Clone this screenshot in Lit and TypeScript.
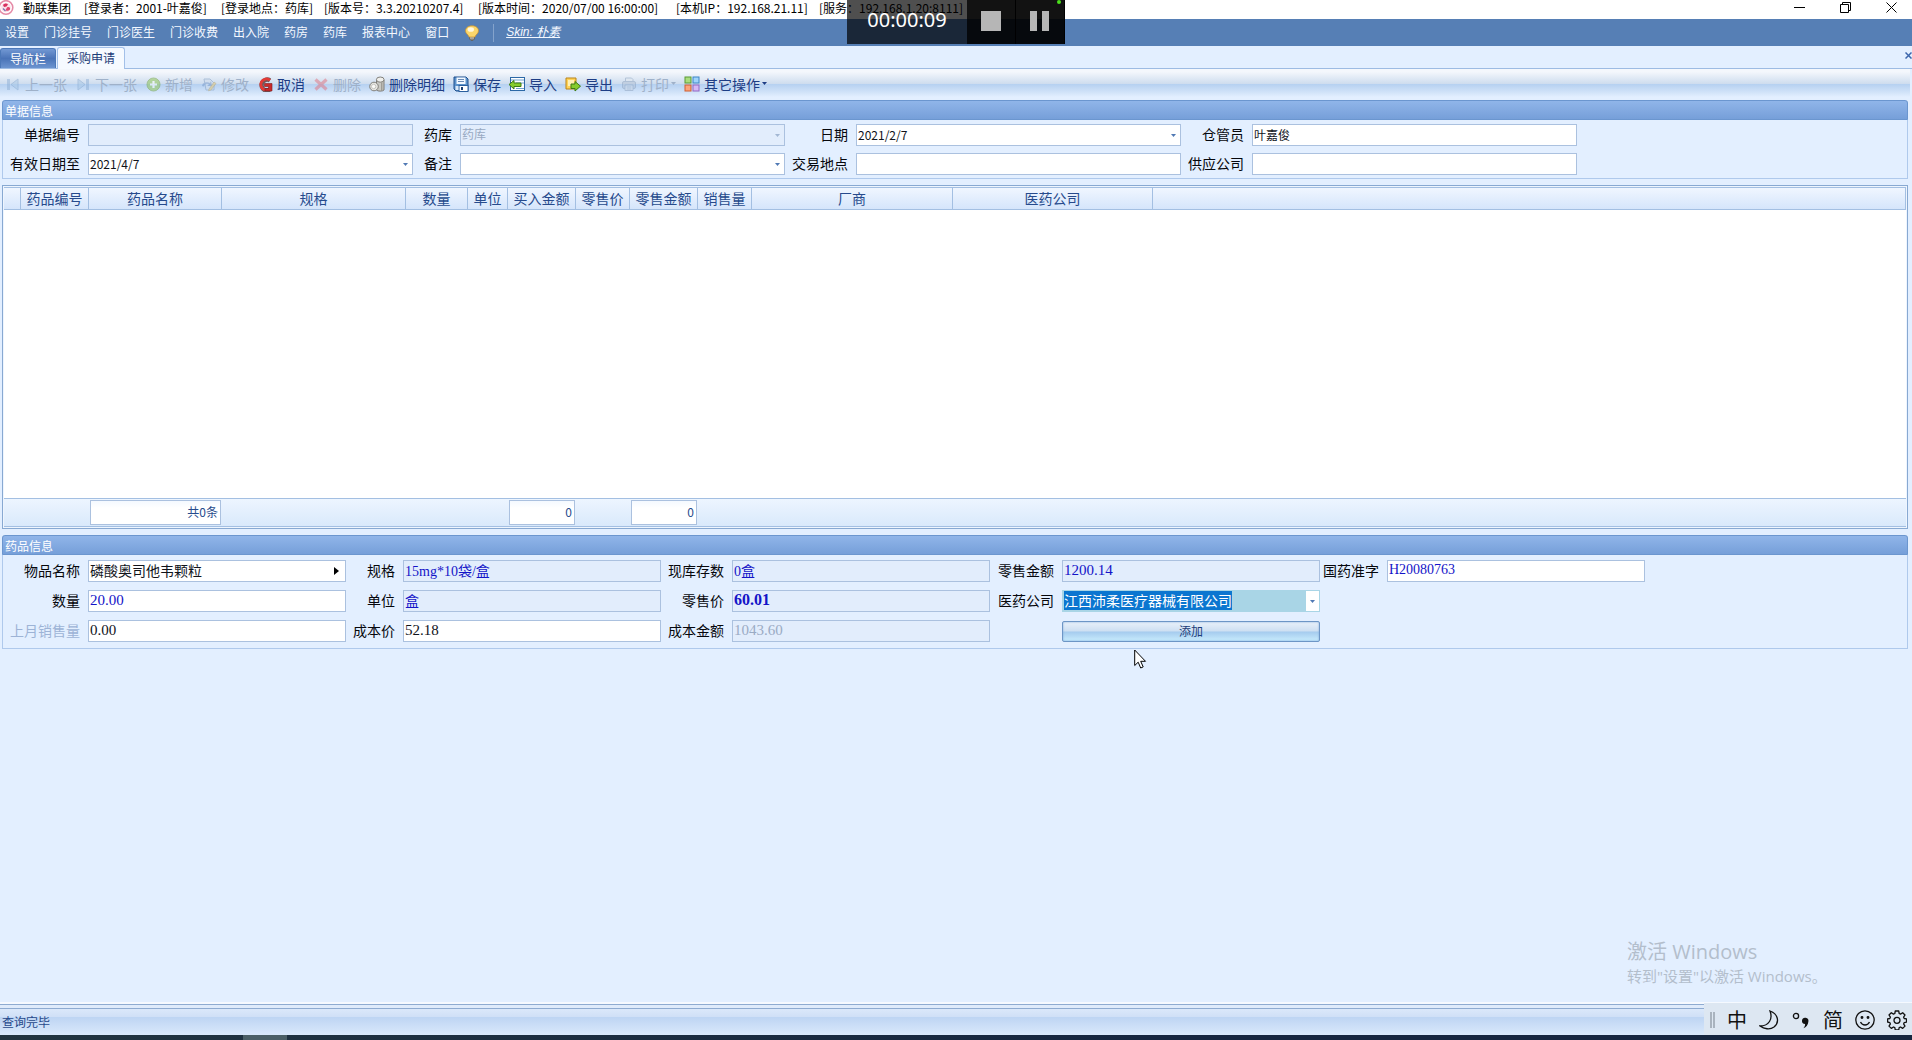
import { LitElement, html, css, svg, nothing, type TemplateResult } from "lit";
import { customElement, query } from "lit/decorators.js";
import { classMap } from "lit/directives/class-map.js";

interface Tool {
  label: string;
  icon: TemplateResult;
  disabled?: boolean;
  menu?: boolean;
}

interface Field {
  id: string;
  label: string;
  value?: string;
  kind?: "text" | "date" | "select" | "lookup" | "combo";
  tone?: "number" | "mixed" | "code" | "strong";
  ink?: "blue" | "grey";
  locked?: boolean;
  faint?: boolean;
}

const icon = (body: TemplateResult) =>
  html`<svg class="icon" viewBox="0 0 16 16" aria-hidden="true">${body}</svg>`;

const glyphs = {
  first: icon(svg`<rect x="2" y="3" width="3" height="11" fill="#8fb0d6"/><path d="M13 3v11L6 8.500z" fill="#a9c8e6" stroke="#86a8cf"/>`),
  last: icon(svg`<rect x="11" y="3" width="3" height="11" fill="#8fb0d6"/><path d="M3 3v11l7-5.500z" fill="#a9c8e6" stroke="#86a8cf"/>`),
  add: icon(svg`<circle cx="8.500" cy="8.500" r="6.500" fill="#8bc34a" stroke="#6fa23a"/><path d="M8.500 5v7M5 8.500h7" stroke="#fff" stroke-width="2.200"/>`),
  edit: icon(svg`<path d="M3 3h6l4 4v7H5z" fill="#cfdcec" stroke="#7f9cc0"/><path d="M1 10a5 4 0 0 1 8-3l1-2 1 5-5 0 2-1.500a3 3 0 0 0-5 2z" fill="#7396c8"/><path d="M8 13l5-7 2 1.500-5 6.500-2.500.8z" fill="#e8c66b" stroke="#a58c4c" stroke-width=".6"/>`),
  cancel: icon(svg`<path d="M13 4.300A5.600 5.600 0 1 0 8 14.300h5.500" fill="none" stroke="#6e5a5c" stroke-width="4.400"/><path d="M13 4.300A5.600 5.600 0 1 0 8 14" fill="none" stroke="#e23a35" stroke-width="2.800"/><path d="M7.500 7.500H15V15H8v-2.500h3.500V10.500h-4z" fill="#c92a2a" stroke="#7c1b1f" stroke-width=".6"/>`),
  remove: icon(svg`<path d="M2.500 3.500l11 10M13.500 3.500l-11 10" stroke="#e0707c" stroke-width="3.200"/>`),
  bin: icon(svg`<path d="M7.500 4v10c1 1.600 6.500 1.400 7.500 0V4z" fill="#c9c9c4" stroke="#77756f" stroke-width=".9"/><ellipse cx="11.250" cy="3.600" rx="3.800" ry="2.600" fill="#efefec" stroke="#77756f" stroke-width=".9"/><path d="M12.800 6.500v8" stroke="#8e8b84"/><circle cx="5" cy="10.500" r="4.300" fill="#e6e6e2" stroke="#77756f" stroke-width=".9"/><circle cx="4.600" cy="10.500" r="2.200" fill="#fafaf8" stroke="#b5b3ad" stroke-width=".7"/>`),
  save: icon(svg`<path d="M1 1h12l2 2v12H3l-2-2z" fill="#5c93cc" stroke="#1e4f8c"/><rect x="3.500" y="1.500" width="9" height="6.500" fill="#f2f8ff"/><path d="M5 3.500h6M5 5.500h6" stroke="#6b8cb5"/><rect x="6" y="9.500" width="9" height="6" fill="#fff" stroke="#2b5f9e"/><rect x="8" y="11" width="2" height="3" fill="#1b3f73"/><rect x="2.500" y="10" width="3" height="4" fill="#dbe9f8"/>`),
  importIn: icon(svg`<rect x="1.500" y="1.500" width="14" height="13" fill="#fff" stroke="#2c68a6"/><path d="M2 4h13M7 7h8M7 12.500h8" stroke="#6fa0cf"/><path d="M0 8.500l5-4v2.500h7v3.500H5v2.500z" fill="#86cc2c" stroke="#3c7a15"/>`),
  exportOut: icon(svg`<path d="M1 2h10v11H1z" fill="#ffd257" stroke="#b98318"/><path d="M3 4h6v6H3z" fill="#fff0b3"/><path d="M6 8h4V5.500l5.500 4.700-5.500 4.800V12.500H6z" fill="#86cc2c" stroke="#3c7a15"/>`),
  print: icon(svg`<path d="M4.500 6V2h6l1.500 1.500V6" fill="#dfe6ef" stroke="#8aa0bd"/><rect x="1.500" y="5.500" width="13" height="7" rx="1.500" fill="#b3c1d4" stroke="#8aa0bd"/><path d="M4 9h8v5.500H4z" fill="#dfe6ef" stroke="#8aa0bd"/><path d="M5.500 11h5M5.500 13h5" stroke="#8aa0bd"/>`),
  tiles: icon(svg`<rect x="1" y="1" width="6" height="6" fill="#a9dd7d" stroke="#5b9a34"/><rect x="9" y="1" width="6" height="6" fill="#9fd3fb" stroke="#3c86c6"/><rect x="1" y="9" width="6" height="6" fill="#fba37c" stroke="#cf5f30"/><rect x="9" y="9" width="6" height="6" fill="#d5b8f5" stroke="#9068c4"/>`),
};

const MENUS = ["设置", "门诊挂号", "门诊医生", "门诊收费", "出入院", "药房", "药库", "报表中心", "窗口"];

const TITLE = [
  "勤联集团",
  "[登录者：2001-叶嘉俊]",
  "[登录地点：药库]",
  "[版本号：3.3.20210207.4]",
  "[版本时间：2020/07/00 16:00:00]",
  "[本机IP：192.168.21.11]",
  "[服务：192.168.1.20:8111]",
];

const TOOLS: Tool[] = [
  { label: "上一张", icon: glyphs.first, disabled: true },
  { label: "下一张", icon: glyphs.last, disabled: true },
  { label: "新增", icon: glyphs.add, disabled: true },
  { label: "修改", icon: glyphs.edit, disabled: true },
  { label: "取消", icon: glyphs.cancel },
  { label: "删除", icon: glyphs.remove, disabled: true },
  { label: "删除明细", icon: glyphs.bin },
  { label: "保存", icon: glyphs.save },
  { label: "导入", icon: glyphs.importIn },
  { label: "导出", icon: glyphs.exportOut },
  { label: "打印", icon: glyphs.print, disabled: true, menu: true },
  { label: "其它操作", icon: glyphs.tiles, menu: true },
];

const BILL: Field[] = [
  { id: "bill-no", label: "单据编号", locked: true },
  { id: "store", label: "药库", value: "药库", kind: "select", locked: true },
  { id: "date", label: "日期", value: "2021/2/7", kind: "date" },
  { id: "keeper", label: "仓管员", value: "叶嘉俊" },
  { id: "valid", label: "有效日期至", value: "2021/4/7", kind: "date" },
  { id: "note", label: "备注", kind: "select" },
  { id: "place", label: "交易地点" },
  { id: "supplier", label: "供应公司" },
];

const DRUG: Field[][] = [
  [
    { id: "name", label: "物品名称", value: "磷酸奥司他韦颗粒", kind: "lookup", tone: "mixed" },
    { id: "spec", label: "规格", value: "15mg*10袋/盒", tone: "mixed", ink: "blue", locked: true },
    { id: "stock", label: "现库存数", value: "0盒", tone: "mixed", ink: "blue", locked: true },
    { id: "retail-sum", label: "零售金额", value: "1200.14", tone: "number", ink: "blue", locked: true },
    { id: "approval", label: "国药准字", value: "H20080763", tone: "code", ink: "blue" },
  ],
  [
    { id: "qty", label: "数量", value: "20.00", tone: "number", ink: "blue" },
    { id: "unit", label: "单位", value: "盒", tone: "mixed", ink: "blue", locked: true },
    { id: "retail", label: "零售价", value: "60.01", tone: "strong", ink: "blue", locked: true },
    { id: "company", label: "医药公司", value: "江西沛柔医疗器械有限公司", kind: "combo", tone: "mixed" },
  ],
  [
    { id: "last-sales", label: "上月销售量", value: "0.00", tone: "number", faint: true },
    { id: "cost", label: "成本价", value: "52.18", tone: "number" },
    { id: "cost-sum", label: "成本金额", value: "1043.60", tone: "number", ink: "grey", locked: true },
  ],
];

const COLUMNS: { name: string; width?: number; total?: string }[] = [
  { name: "", width: 17 },
  { name: "药品编号", width: 68 },
  { name: "药品名称", width: 133, total: "共0条" },
  { name: "规格", width: 184 },
  { name: "数量", width: 62 },
  { name: "单位", width: 40 },
  { name: "买入金额", width: 68, total: "0" },
  { name: "零售价", width: 54 },
  { name: "零售金额", width: 68, total: "0" },
  { name: "销售量", width: 54 },
  { name: "厂商", width: 201 },
  { name: "医药公司", width: 200 },
  { name: "" },
];

@customElement("app-root")
export class AppRoot extends LitElement {
  static styles = css`
    :host {
      display: flex;
      flex-direction: column;
      position: relative;
      min-height: 100vh;
      background: #e3efff;
      color: #10131a;
      font: 12px/16px "Noto Sans CJK SC", sans-serif;
      overflow: hidden;
    }
    * { box-sizing: border-box; }
    button, input, select { font: inherit; color: inherit; margin: 0; padding: 0; border: 0; background: none; border-radius: 0; outline: 0; }
    svg { display: block; flex: none; }
    a { color: inherit; }

    .titlebar { display: flex; height: 19px; background: #fff; color: #000; white-space: nowrap; }
    .logo { margin: 0 9px 0 0; }
    .titles { display: grid; grid-template-columns: 61px 137px 103px 154px 198px 143px auto; flex: 1; margin: 0; font-size: 12px; font-weight: 400; line-height: 15px; justify-content: start; }
    .window { display: flex; align-items: flex-start; gap: 35px; padding: 1px 15px 0 0; }
    .window button { height: 12px; }

    .menubar { display: flex; align-items: center; gap: 15px; height: 27px; padding-left: 5px; background: #567fb5; color: #f4f8ff; }
    .menubar button, .skin { padding-bottom: 2px; line-height: 18px; }
    .divider { width: 1px; height: 18px; background: #84a3cc; margin: 0 -3px 0 -2px; }
    .skin { font-family: "Liberation Sans", "Noto Sans CJK SC", sans-serif; font-style: italic; text-decoration: underline; }

    .tabs { display: flex; align-items: flex-end; gap: 1px; height: 23px; border-bottom: 1px solid #9dbbe3; }
    .tab { height: 20px; padding: 0 9px; border: 1px solid #4c78b8; border-bottom: 0; border-radius: 3px 3px 0 0; background: linear-gradient(#7298d3, #4a73b7 50%, #6c94d0); color: #fff; }
    .tab.current { height: 22px; margin-bottom: -1px; padding-bottom: 2px; border-color: #a3c0e8; background: #f6faff; color: #1d3d78; }
    .tab-close { margin: 0 0 9px auto; width: 7px; height: 7px; }

    .toolbar { display: flex; align-items: center; gap: 8px; height: 28px; margin: 0 2px 3px 0; padding: 1px 0 0 5px; background: linear-gradient(#f4f7fc, #f4f7fc 10%, #cddcee 54%, #b6d1f1 55%, #d3e4f9 85%, #e3efff); }
    .tool { display: flex; align-items: center; gap: 4px; height: 22px; color: #1d3d85; font-size: 14px; line-height: 20px; }
    .tool:disabled { color: #9fb1c9; }
    .tool:disabled .icon { opacity: 0.5; }
    .icon { width: 16px; height: 16px; }
    .tool .caret { margin: 0 0 0 -2px; }

    .panel { margin: 0 4px 6px 2px; border: 1px solid #afc9ec; border-top: 0; border-radius: 3px 3px 0 0; }
    .panel h2 { height: 20px; margin: 0 -1px; padding: 0 2px; border: 1px solid #6b96cf; border-radius: 3px 3px 0 0; background: linear-gradient(#90b5e9, #769fd9); color: #fff; font-size: 12px; font-weight: 400; line-height: 19px; }
    .form { display: grid; align-items: center; }
    .bill { grid-template-columns: 85px 325px 47px 325px 71px 325px 71px 325px; gap: 7px 0; padding: 4px 0 3px; }
    .drug { grid-template-columns: 85px 258px 57px 258px 71px 258px 72px 258px 67px 258px; gap: 8px 0; padding: 5px 0 6px; }
    .form label { padding: 0 8px 2px 0; text-align: right; font-size: 14px; line-height: 20px; white-space: nowrap; color: #06070c; }
    .form label.faint { color: #9db3d6; }
    .lead { grid-column-start: 1; }

    .box { display: flex; align-items: center; height: 22px; border: 1px solid #abc1df; background: #fff; }
    .box input, .box select { flex: 1; min-width: 0; height: 20px; padding: 0 1px 2px; appearance: none; opacity: 1; }
    .box.locked { background: #e2edfc; }
    .box.locked select { color: #98a9c2; }
    .box button { display: flex; align-items: center; justify-content: center; width: 13px; height: 20px; }
    .box.lookup button { width: 18px; }
    .box.select { display: grid; grid-template-columns: 1fr 13px; }
    .box.select select { grid-area: 1 / 1 / 2 / 3; width: 100%; }
    .box.select .caret { grid-area: 1 / 2; justify-self: center; pointer-events: none; }
    .mixed, .code { font-family: "Liberation Serif", "Noto Sans CJK SC", serif; font-size: 14px; }
    .number { font-family: "Liberation Serif", serif; font-size: 15px; }
    .strong { font-family: "Liberation Serif", serif; font-size: 16px; font-weight: 700; }
    .blue { color: #1414c8; }
    .grey { color: #9aabc4; }
    .combo { border-color: #a9d5e6; background: #a9d5e6; }
    .combo button { background: #fff; }
    .combo input::selection { background: #0b76d0; color: #fff; }
    .add { grid-column: 8; height: 21px; border: 1px solid #6d96c6; border-radius: 2px; background: linear-gradient(#e9f1fa, #cddff2 48%, #a5cbee 52%, #c8ecfd); color: #1d3d78; line-height: 18px; box-shadow: inset 0 0 2px #7aa5d8; }

    .grid { margin: 0 4px 6px 2px; padding: 1px; border: 1px solid #88a9d2; background: #eef5fe; }
    table { width: 100%; table-layout: fixed; border-collapse: separate; border-spacing: 0; }
    th, td { padding: 0; }
    th { height: 23px; padding-bottom: 2px; border: solid #a3bfe2; border-width: 1px 1px 1px 0; background: linear-gradient(#f0f6ff, #d5e5fb); color: #264a8c; font-size: 14px; font-weight: 400; line-height: 18px; white-space: nowrap; }
    .empty { height: 288px; background: #fff; }
    tfoot td { height: 29px; padding: 0 1px; border: solid #a3bfe2; border-width: 1px 0; background: linear-gradient(#edf5ff, #d9e9fb); }
    output { display: block; height: 25px; padding-right: 2px; border: 1px solid #abc1df; background: linear-gradient(#f4f9ff, #fff 30%); color: #264a8c; line-height: 22px; text-align: right; }

    .work { flex: 1; }
    .status { height: 31px; border-top: 1px solid #8eabd1; box-shadow: 0 -2px #f5f9ff; background: #dfebfb; padding-top: 3px; }
    .status p { margin: 0; height: 27px; padding-left: 2px; border-top: 1px solid #8eabd1; background: linear-gradient(#dbe8fa, #d0e0f7 29%, #bdd4f3 30%, #dae9fb); color: #26488a; line-height: 25px; }
    .taskbar { display: flex; height: 5px; background: linear-gradient(90deg, #21343f, #16263f 60%); padding-left: 243px; }
    .taskbar i { width: 44px; background: #4b5f66; }

    .recorder { position: absolute; top: 0; left: 847px; display: flex; height: 44px; color: #fff; }
    .recorder time { width: 120px; padding-top: 6px; background: rgba(0, 0, 0, 0.69); font: 20px/28px "Noto Sans", sans-serif; text-align: center; }
    .recorder button { display: flex; align-items: center; justify-content: center; width: 49px; padding-bottom: 2px; background: rgba(0, 0, 0, 0.93); border-right: 1px solid rgba(0, 0, 0, 0.9); }
    .live { position: absolute; top: 0; right: 4px; width: 4px; height: 4px; border-radius: 2px; background: #4be01c; }
    .watermark { position: absolute; right: 91px; bottom: 53px; width: 194px; margin: 0; color: #b3becc; font: 15px/22px "Open Sans", "Noto Sans CJK SC", sans-serif; white-space: nowrap; }
    .watermark strong { display: block; font-size: 20px; font-weight: 400; line-height: 26px; }
    .ime { position: absolute; right: 0; bottom: 5px; display: flex; align-items: center; gap: 12px; width: 208px; height: 32px; padding: 2px 0 0 6px; background: #dde7f2; color: #111; }
    .ime button { width: 20px; height: 26px; font-size: 20px; line-height: 26px; display: flex; align-items: center; justify-content: center; }
    .grip { width: 5px; height: 16px; border: solid #a9b3be; border-width: 0 2px; }
    .cursor { position: absolute; left: 1134px; top: 649px; }
  `;

  @query("#company") private company!: HTMLInputElement;

  firstUpdated() {
    this.company.focus({ preventScroll: true });
    this.company.select();
  }

  private caret(color = "#5079b4") {
    return html`<svg class="caret" width="5" height="3" viewBox="0 0 5 3" aria-hidden="true"><path d="M0 0h5L2.500 3z" fill=${color} /></svg>`;
  }

  private field(f: Field, first: boolean) {
    const kind = f.kind ?? "text";
    const box = { box: true, locked: !!f.locked, [kind]: true };
    const ink = [f.tone ?? "", f.ink ?? ""].join(" ");
    const input = html`<input id=${f.id} class=${ink} type="text" .value=${f.value ?? ""} ?readonly=${f.locked} spellcheck="false" autocomplete="off" />`;
    return html`
      <label for=${f.id} class=${classMap({ lead: first, faint: !!f.faint })}>${f.label}</label>
      <div class=${classMap(box)}>
        ${kind === "select"
          ? html`<select id=${f.id} ?disabled=${f.locked}><option>${f.value ?? ""}</option></select>${this.caret(f.locked ? "#a3b7d3" : undefined)}`
          : input}
        ${kind === "date" || kind === "combo"
          ? html`<button type="button" aria-label=${f.label}>${this.caret()}</button>`
          : nothing}
        ${kind === "lookup"
          ? html`<button type="button" aria-label=${f.label}><svg width="5" height="8" viewBox="0 0 5 8"><path d="M0 0v8l5-4z" fill="#000" /></svg></button>`
          : nothing}
      </div>
    `;
  }

  private titlebar() {
    return html`
      <header class="titlebar">
        <svg class="logo" width="14" height="16" viewBox="0 0 14 16" aria-hidden="true">
          <circle cx="6" cy="7.500" r="6.800" fill="#fff" stroke="#e58aa6" stroke-width="1.600" />
          <circle cx="6" cy="7.500" r="4.800" fill="#fbdfe8" />
          <path d="M3 5c1.500-2 4-2 5-.5L6.500 6.500 4 7z" fill="#d8305f" />
          <path d="M7 7.500c1.500-1 3.500 0 3 1.800-.5 1.500-3 2-4.500 1z" fill="#e0456f" />
          <path d="M3 8.500l2.500 2.500" stroke="#7a6fb0" stroke-width="1.200" />
        </svg>
        <h1 class="titles">${TITLE.map((t) => html`<span>${t}</span>`)}</h1>
        <div class="window">
          <button aria-label="最小化"><svg width="11" height="11" viewBox="0 0 11 11"><path d="M0 5.500h11" stroke="#000" /></svg></button>
          <button aria-label="还原"><svg width="11" height="11" viewBox="0 0 11 11" fill="none" stroke="#000"><path d="M.5 2.500h8v8h-8zM2.500 2.500v-2h8v8h-2" /></svg></button>
          <button aria-label="关闭"><svg width="11" height="11" viewBox="0 0 11 11"><path d="M.5.5l10 10M10.500.5l-10 10" stroke="#000" /></svg></button>
        </div>
      </header>
    `;
  }

  render() {
    return html`
      ${this.titlebar()}
      <nav class="menubar">
        ${MENUS.map((m) => html`<button>${m}</button>`)}
        <svg width="16" height="16" viewBox="0 0 16 16" aria-hidden="true">
          <path d="M5.500 10.500h5v3.500l-1.500 1.500h-2L5.500 14z" fill="#8a8478" stroke="#5d584f" stroke-width=".6" />
          <path d="M8 .8c4 0 6.500 2.200 6.500 5 0 2.700-2.700 3.700-3.500 6.200H5C4.200 9.500 1.500 8.500 1.500 5.800 1.500 3 4 .8 8 .8z" fill="#fbd66b" stroke="#c98f2b" stroke-width=".7" />
          <ellipse cx="6.800" cy="4.500" rx="3.200" ry="2.300" fill="#fff8df" />
          <path d="M6 13h4" stroke="#d8d3c8" stroke-width=".8" />
        </svg>
        <span class="divider"></span>
        <a class="skin" href="#skin">Skin: 朴素</a>
      </nav>
      <div class="tabs" role="tablist">
        <button class="tab" role="tab">导航栏</button>
        <button class="tab current" role="tab" aria-selected="true">采购申请</button>
        <button class="tab-close" aria-label="关闭页签"><svg width="7" height="7" viewBox="0 0 7 7"><path d="M.5.5l6 6M6.500.5l-6 6" stroke="#3d66ac" stroke-width="1.500" /></svg></button>
      </div>
      <div class="toolbar" role="toolbar">
        ${TOOLS.map(
          (t) => html`<button class="tool" ?disabled=${t.disabled}>${t.icon}<span>${t.label}</span>${t.menu ? this.caret(t.disabled ? "#9fb1c9" : "#1d3d85") : nothing}</button>`
        )}
      </div>
      <section class="panel">
        <h2>单据信息</h2>
        <form class="form bill">${BILL.map((f, i) => this.field(f, i % 4 === 0))}</form>
      </section>
      <div class="grid">
        <table>
          <colgroup>${COLUMNS.map((c) => html`<col width=${c.width ?? nothing} />`)}</colgroup>
          <thead><tr>${COLUMNS.map((c) => html`<th scope="col">${c.name}</th>`)}</tr></thead>
          <tbody><tr><td class="empty" colspan=${COLUMNS.length}></td></tr></tbody>
          <tfoot><tr>${COLUMNS.map((c) => html`<td>${c.total ? html`<output>${c.total}</output>` : nothing}</td>`)}</tr></tfoot>
        </table>
      </div>
      <section class="panel">
        <h2>药品信息</h2>
        <form class="form drug">
          ${DRUG.map((row) => row.map((f, i) => this.field(f, i === 0)))}
          <button class="add" type="button">添加</button>
        </form>
      </section>
      <main class="work"></main>
      <footer class="status"><p>查询完毕</p></footer>
      <div class="taskbar"><i></i></div>

      <p class="watermark"><strong>激活 Windows</strong>转到"设置"以激活 Windows。</p>
      <div class="ime">
        <span class="grip"></span>
        <button>中</button>
        <button aria-label="半角"><svg width="20" height="20" viewBox="0 0 20 20" fill="none" stroke="#111" stroke-width="1.300"><path d="M11 1c8 3 10 11 4 16-4 3-10 2-14-1 9 0 13-7 10-15z" /></svg></button>
        <button aria-label="标点"><svg width="18" height="20" viewBox="0 0 18 20"><circle cx="4" cy="6" r="2.600" fill="none" stroke="#111" stroke-width="1.300" /><path d="M10 10.500a3.200 3.200 0 1 1 6.400 1c-.3 3.500-2 5.500-5 6.800 1.200-1.500 1.700-2.700 1.700-4.300a3.200 3.200 0 0 1-3.100-3.500z" fill="#111" /></svg></button>
        <button>简</button>
        <button aria-label="表情"><svg width="20" height="20" viewBox="0 0 20 20" fill="none" stroke="#111" stroke-width="1.300"><circle cx="10" cy="10" r="9.200" /><path d="M5.500 12c2 4 7 4 9 0" /><circle cx="7" cy="7.500" r=".8" fill="#111" /><circle cx="13" cy="7.500" r=".8" fill="#111" /></svg></button>
        <button aria-label="设置"><svg width="20" height="20" viewBox="0 0 20 20" fill="none" stroke="#111" stroke-width="1.300" stroke-linejoin="round"><path d="M8.300 1h3.400l.5 2.500 1.300.6 2.200-1.400 2.300 2.300-1.400 2.200.6 1.300 2.300.4v3.200l-2.300.5-.6 1.300 1.400 2.200-2.300 2.300-2.200-1.400-1.300.6-.5 2.400H8.300l-.5-2.400-1.300-.6-2.200 1.400L2 16.100l1.400-2.200-.6-1.300L.6 12V8.900l2.200-.4.6-1.300L2 5l2.300-2.300 2.200 1.400 1.300-.6z" /><circle cx="10" cy="10.300" r="3" /></svg></button>
      </div>
      <div class="recorder">
        <time>00:00:09</time>
        <button aria-label="停止"><svg width="20" height="20"><rect width="20" height="20" fill="#b6b6b6" /></svg></button>
        <button aria-label="暂停"><svg width="20" height="20"><path d="M0 0h7v20H0zM12 0h7v20h-7z" fill="#b6b6b6" /></svg></button>
        <span class="live"></span>
      </div>
      <svg class="cursor" width="13" height="20" viewBox="0 0 13 20" aria-hidden="true"><path d="M.7 1v15.500l3.500-3.300 2.500 5.800 2.500-1.100-2.500-5.600h4.800z" fill="#fff" stroke="#000" /></svg>
    `;
  }
}
